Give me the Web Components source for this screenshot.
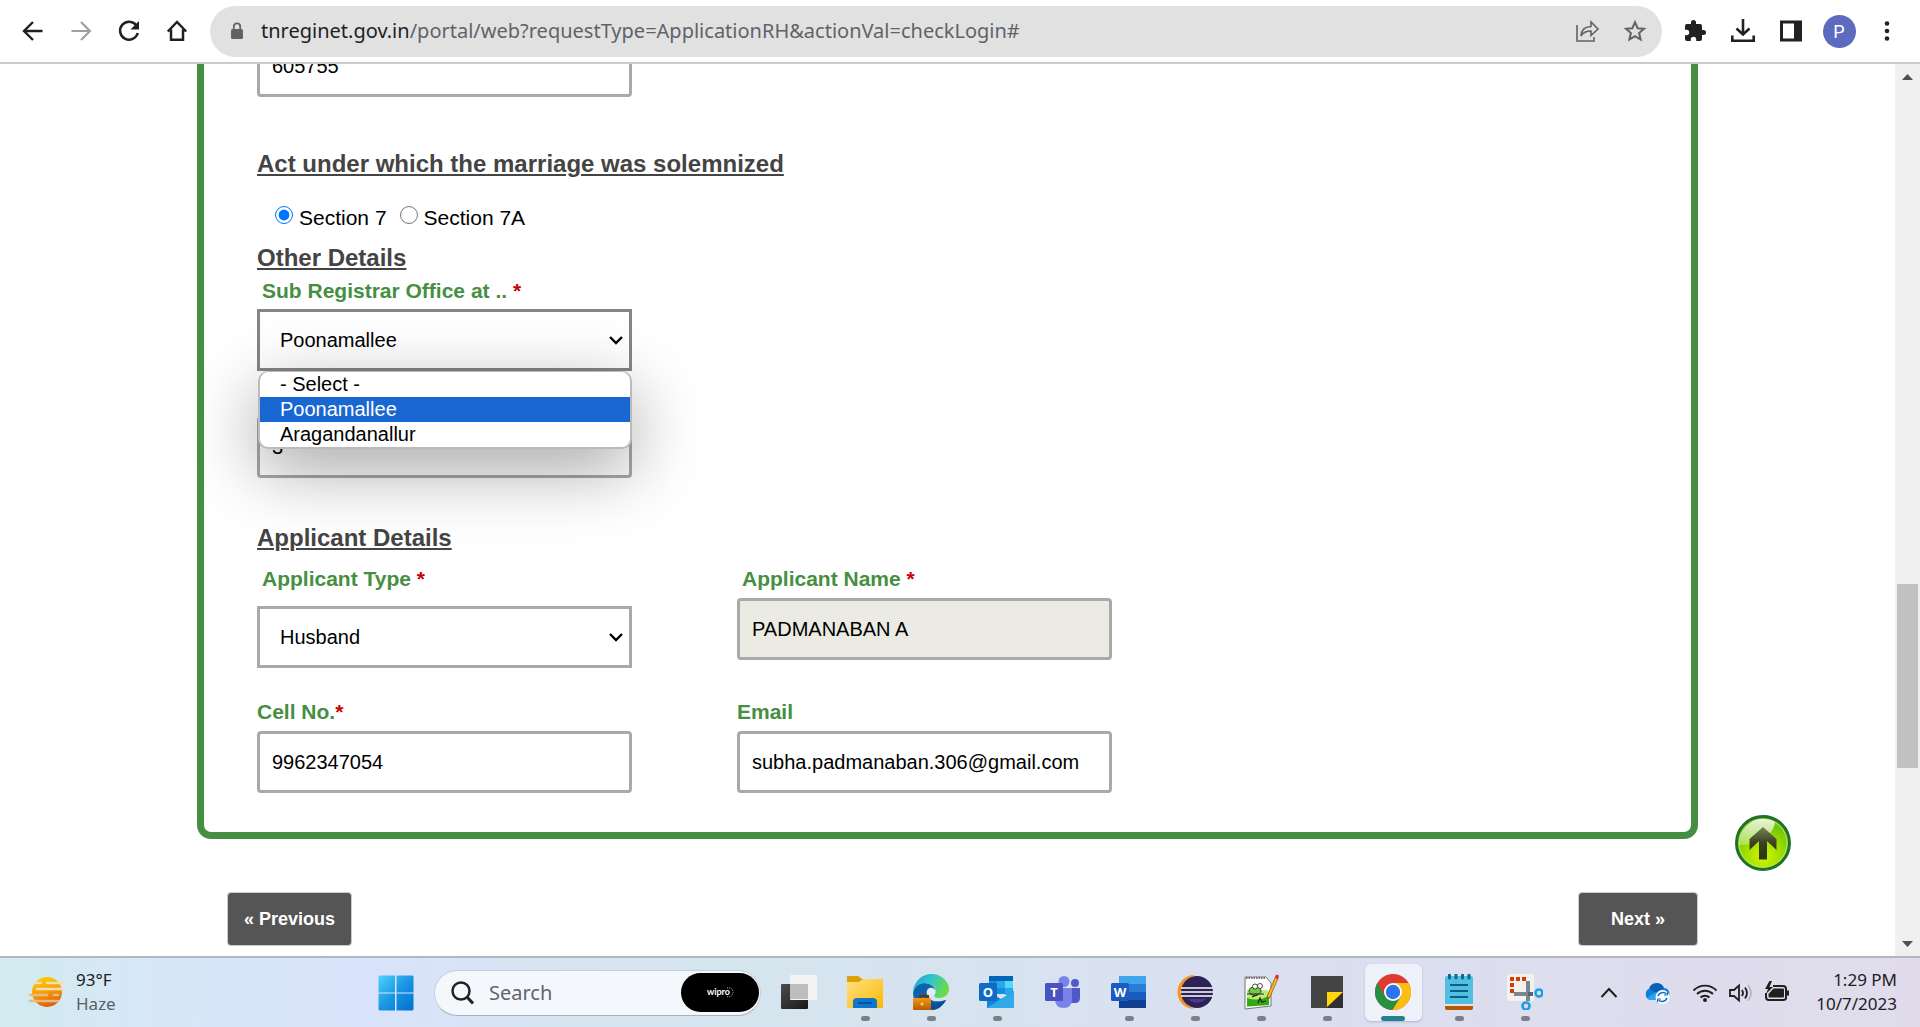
<!DOCTYPE html>
<html lang="en">
<head>
<meta charset="utf-8">
<title>Marriage registration</title>
<style>
html,body{height:100%}
body{margin:0;overflow:hidden;background:#fff;font-family:"Liberation Sans",Arial,sans-serif}
</style>
</head>
<body>
<desktop-screen></desktop-screen>

<template id="t-screen">
<style>
:host{display:flex;flex-direction:column;height:100vh}
web-page{flex:1;min-height:0}
</style>
<browser-toolbar></browser-toolbar>
<web-page></web-page>
<task-bar></task-bar>
</template>

<template id="t-toolbar">
<style>
:host{display:flex;align-items:center;height:62px;border-bottom:2px solid #cbcbcb;background:#fff;box-sizing:content-box;font-family:"Noto Sans","Open Sans",sans-serif;color:#202124}
button{all:unset;display:grid;place-items:center;width:48px;height:48px;flex:none}
svg{display:block;fill:none;stroke:currentColor}
.nav{display:flex;padding-left:9px;margin-right:9px}
.off{color:#a0a0a0}
.bar{display:flex;align-items:center;flex:1;height:51px;border-radius:26px;background:#e1e1e1;color:#5f6368;min-width:0;box-sizing:border-box;padding-right:3px}
.bar svg{flex:none}
.lock{margin-left:19px;margin-right:16px}
.url{flex:1;min-width:0;display:flex;align-items:center}
.url a{flex:1;font-size:20px;line-height:28px;color:#5f6368;text-decoration:none;white-space:nowrap;overflow:hidden}
.url b{font-weight:400;color:#202124}
.right{display:flex;padding-left:9px;padding-right:9px}
.avatar{width:33px;height:33px;border-radius:50%;background:#5c6bc0;color:#fff;font:18px/33px Roboto,sans-serif;text-align:center}
</style>
<nav class="nav" aria-label="Navigation">
<button aria-label="Back"><svg width="24" height="24" viewBox="0 0 24 24" stroke-width="2.4"><path d="M21.500 12H3.500M12 3 3 12l9 9"/></svg></button>
<button aria-label="Forward" class="off"><svg width="24" height="24" viewBox="0 0 24 24" stroke-width="2.200"><path d="M2.500 12h18M12 3l9 9-9 9"/></svg></button>
<button aria-label="Reload"><svg width="24" height="24" viewBox="0 0 24 24" stroke-width="2.500"><path d="M19.500 6.500A9 9 0 1 0 20.800 14"/><path d="M22 2v8.500h-8.500z" fill="currentColor" stroke="none"/></svg></button>
<button aria-label="Home"><svg width="24" height="24" viewBox="0 0 24 24" stroke-width="2.500"><path d="M2.800 12.500 12 3l9.200 9.500M6 10.500V20.800h12V10.500"/></svg></button>
</nav>
<div class="bar">
<svg class="lock" width="16" height="20" viewBox="0 0 16 20"><rect x="2" y="8" width="12" height="10" rx="1.500" fill="currentColor" stroke="none"/><path d="M4.800 9V5.500a3.200 3.200 0 0 1 6.400 0V9" stroke-width="1.800"/></svg>
<div class="url"><a href="#"><b>tnreginet.gov.in</b>/portal/web?requestType=ApplicationRH&amp;actionVal=checkLogin#</a></div>
<button aria-label="Share"><svg width="26" height="24" viewBox="0 0 26 24" stroke-width="1.600"><path d="M3 6v16h17v-4"/><path d="M7 17c.5-6 4-9.500 10-9.500V3l7 7-7 6.500V12c-5 0-8 1.500-10 5z"/></svg></button>
<button aria-label="Bookmark"><svg width="24" height="24" viewBox="0 0 24 24" stroke-width="2"><path d="m12 3.200 2.600 6 6.400.6-4.900 4.300 1.500 6.400L12 17.100l-5.600 3.400 1.500-6.400L3 9.800l6.400-.6z"/></svg></button>
</div>
<div class="right">
<button aria-label="Extensions"><svg width="24" height="24" viewBox="0 0 24 24"><path fill="currentColor" stroke="none" d="M20.500 11H19V7a2 2 0 0 0-2-2h-4V3.500a2.500 2.500 0 0 0-5 0V5H4a2 2 0 0 0-2 2v3.800h1.500a2.700 2.700 0 0 1 0 5.400H2V20a2 2 0 0 0 2 2h3.800v-1.500a2.700 2.700 0 0 1 5.400 0V22H17a2 2 0 0 0 2-2v-4h1.500a2.500 2.500 0 0 0 0-5z"/></svg></button>
<button aria-label="Downloads"><svg width="26" height="26" viewBox="0 0 26 26" stroke-width="2.600"><path d="M13 1v15M6.500 10.500 13 16.500l6.500-6M2.300 17.500v5.200h21.400v-5.200"/></svg></button>
<button aria-label="Side panel"><svg width="24" height="24" viewBox="0 0 24 24"><path fill="currentColor" fill-rule="evenodd" stroke="none" d="M1 1.500h22v21H1zM4 4.500v15h11v-15z"/></svg></button>
<button aria-label="Profile"><span class="avatar">P</span></button>
<button aria-label="Menu"><svg width="6" height="22" viewBox="0 0 6 22"><g fill="currentColor" stroke="none"><circle cx="3" cy="3.500" r="2.300"/><circle cx="3" cy="11" r="2.300"/><circle cx="3" cy="18.500" r="2.300"/></g></svg></button>
</div>
</template>

<template id="t-page">
<style>
:host{display:flex;overflow:hidden;background:#fff;position:relative}
main{flex:1;min-width:0;display:flex;flex-direction:column;justify-content:flex-end;align-items:center;padding-bottom:10px}
.wrap{width:100%;max-width:1501px;flex:none}
.pager{display:flex;justify-content:space-between;margin-top:53px;padding-left:30px}
.pager button{box-sizing:border-box;height:54px;padding:0 16px;border:1px solid #ccc;border-radius:4px;background:#555;color:#fff;font:bold 18px/24px "Liberation Sans",Arial,sans-serif}
.pager button.next{padding:0 32px}
.top{position:absolute;right:129px;bottom:85px;width:56px;height:56px;border:0;padding:0;background:none}
.top svg{display:block}
</style>
<main>
<div class="wrap">
<registration-form></registration-form>
<div class="pager"><button>« Previous</button><button class="next">Next »</button></div>
</div>
</main>
<scroll-track></scroll-track>
<button class="top" aria-label="Back to top"><svg width="56" height="56" viewBox="0 0 56 56">
<defs><radialGradient id="g" cx=".5" cy=".75" r=".65"><stop offset="0" stop-color="#d4f500"/><stop offset=".5" stop-color="#a0e000"/><stop offset="1" stop-color="#6fc010"/></radialGradient>
<linearGradient id="a" x1="0" y1="0" x2="0" y2="1"><stop offset="0" stop-color="#77805c"/><stop offset=".5" stop-color="#3a4020"/><stop offset="1" stop-color="#283810"/></linearGradient>
<linearGradient id="s" x1="0" y1="0" x2="0" y2="1"><stop offset="0" stop-color="#fff" stop-opacity=".85"/><stop offset="1" stop-color="#fff" stop-opacity=".3"/></linearGradient></defs>
<circle cx="28" cy="28" r="26.500" fill="url(#g)" stroke="#22702a" stroke-width="3"/><circle cx="28" cy="28" r="24" fill="none" stroke="#b5e86a" stroke-width="1"/>
<path d="M4.500 30A24 24 0 0 1 40 7c-1 10-11 22-35.500 23z" fill="url(#s)"/>
<path d="M28 12 41.500 24v11L32 26v18.500h-8V26l-9.500 9V24z" fill="url(#a)"/></svg></button>
</template>

<template id="t-scroll">
<style>
:host{display:flex;flex-direction:column;align-items:center;width:25px;box-sizing:border-box;padding:10px 0 9px;background:#f0f0f0;flex:none}
svg{display:block;fill:#505050;flex:none}
.before{flex:504}.thumb{flex:184;width:21px;background:#c1c1c1}.after{flex:173}
</style>
<svg width="11" height="6" viewBox="0 0 11 6"><path d="M0 6 5.500 0 11 6z"/></svg>
<div class="before"></div><div class="thumb"></div><div class="after"></div>
<svg width="11" height="6" viewBox="0 0 11 6"><path d="M0 0 5.500 6 11 0z"/></svg>
</template>

<template id="t-form">
<style>
:host{display:block;border:7px solid #468f42;border-radius:14px;padding:60px 53px 39px}
h3{margin:0;font-size:24px;line-height:28px;color:#444;text-decoration:underline;text-decoration-thickness:2px;text-underline-offset:2px;white-space:nowrap}
.row{display:grid;grid-template-columns:repeat(3,minmax(0,375px));column-gap:105px}
.radios{display:flex;margin:28px 0 14px 18px;font-size:21px;line-height:24px;color:#000}
.radios label{display:flex;margin-right:13px}
.radios input{width:18px;height:18px;margin:0 6px 0 0;accent-color:#0075ff}
.h1{margin-top:53px}.office{margin-top:7px}.gap{margin-top:45px}.h3{margin-top:46px}.app{margin-top:15px}.contact{margin-top:32px}
</style>
<div class="row"><form-field value="605755" name="Pin code"></form-field></div>
<h3 class="h1">Act under which the marriage was solemnized</h3>
<div class="radios"><label><input type="radio" name="act" checked>Section 7</label><label><input type="radio" name="act">Section 7A</label></div>
<h3>Other Details</h3>
<div class="row office"><select-field label="Sub Registrar Office at .." options="Poonamallee|- Select -|Aragandanallur" open></select-field></div>
<div class="row gap"><form-field value="3" name="Copies"></form-field></div>
<h3 class="h3">Applicant Details</h3>
<div class="row app"><select-field label="Applicant Type" options="Husband|Wife" loose></select-field><form-field label="Applicant Name" required indent value="PADMANABAN A" readonly></form-field></div>
<div class="row contact"><form-field label="Cell No." required tight value="9962347054"></form-field><form-field label="Email" value="subha.padmanaban.306@gmail.com"></form-field></div>
</template>

<template id="t-field">
<style>
:host{display:block}
label{display:block;margin-bottom:7px;font-weight:bold;font-size:21px;line-height:24px;color:#468f42;white-space:nowrap}
label span{color:#c00}
:host([indent]) label{padding-left:5px}
input{display:block;box-sizing:border-box;width:100%;height:62px;border:3px solid #a9a9a9;border-radius:4px;padding:0 12px;background:#fff;color:#000;font:20px/24px "Liberation Sans",Arial,sans-serif;outline:0}
input[readonly]{background:#ebebe4}
</style>
<label for="f"></label><input id="f" type="text">
</template>

<template id="t-select">
<style>
:host{display:block}
label{display:block;padding-left:5px;margin-bottom:6px;font-weight:bold;font-size:21px;line-height:24px;color:#468f42;white-space:nowrap}
label span{color:#c00}
:host([loose]) label{margin-bottom:15px}
.box{display:grid;align-items:center;position:relative}
.box>*{grid-area:1/1}
select{appearance:none;box-sizing:border-box;width:100%;height:62px;border:3px solid #a9a9a9;border-radius:0;padding:0 20px;background:#fff;color:#000;font:20px/24px "Liberation Sans",Arial,sans-serif;outline:0}
:host([open]) select{border-color:#858585}
svg{justify-self:end;margin-right:9px;fill:none;stroke:#000;stroke-width:2.400;pointer-events:none}
ul{position:absolute;z-index:2;top:62px;left:1px;right:0;margin:0;padding:0;list-style:none;border:2px solid #bbb;border-top-width:1px;border-radius:10px;overflow:hidden;background:#fff;box-shadow:0 20px 70px rgba(0,0,0,.36);font-size:20px;line-height:25px;color:#000}
li{padding-left:20px}
li[aria-selected=true]{background:#1967d2;color:#fff}
</style>
<label for="s"></label>
<div class="box"><select id="s"></select><svg width="14" height="10" viewBox="0 0 14 10"><path d="M1 2l6 6 6-6"/></svg></div>
</template>

<template id="t-taskbar">
<style>
:host{display:grid;grid-template-columns:1fr auto 1fr;align-items:center;height:69px;border-top:2px solid #b0b6c2;font-family:"Noto Sans","Open Sans",sans-serif;color:#202020;background:linear-gradient(90deg,#d2ebf0 0,#d8e6f8 10%,#d9e3fb 19%,#d6e4f0 30%,#d5e5ee 38%,#d8e2f0 55%,#dadff0 70%,#dedded 85%,#e0dcec 100%)}
svg{display:block}
button{all:unset}
.weather{display:flex;align-items:center;padding:0 0 2px 28px;gap:10px;font-size:17px;line-height:24px}
.weather small{display:block;font-size:17px;color:#5b6068}
.mid{display:flex;align-items:center;padding-right:2px}
.start{padding:0 20px 0 18px}
.search{display:flex;align-items:center;box-sizing:border-box;width:327px;height:46px;border-radius:23px;border:1px solid #c6cfdd;border-bottom-color:#a9b3c0;background:#f4f8fd;padding:0 1px 0 16px}
.search input{flex:1;min-width:0;border:0;background:none;outline:0;padding:0 0 0 15px;font:20px/28px "Noto Sans","Open Sans",sans-serif}
.search input::placeholder{color:#606468;opacity:1}
.wipro{width:78px;height:39px;border-radius:20px;background:#000;display:grid;place-items:center}
.tray{display:flex;align-items:center;justify-content:flex-end;padding-right:23px}
.tray svg{fill:none;stroke:#202020;margin-left:10px}
.tray svg.cloud{margin-left:26px}
.tray svg.wifi{margin-left:22px}
.clock{font-size:17px;line-height:24px;text-align:right;margin-left:26px;padding-bottom:2px;white-space:nowrap}
app-icon:first-of-type{margin-left:5px}
</style>
<div class="weather"><svg width="38" height="32" viewBox="0 0 38 32"><defs><linearGradient id="w" x1=".3" y1="0" x2=".6" y2="1"><stop offset="0" stop-color="#fcd000"/><stop offset=".5" stop-color="#f79a10"/><stop offset="1" stop-color="#e05a08"/></linearGradient></defs><circle cx="19" cy="16" r="15" fill="url(#w)"/><g stroke-width="2.600" stroke-linecap="round"><path d="M8 7h5M19 7h17M9 13h26" stroke="#f5dfb0"/><path d="M2 19h17M26 19h4M2 25h28" stroke="#e3bd7c"/></g></svg><div>93°F<small>Haze</small></div></div>
<div class="mid">
<button class="start" aria-label="Start"><svg width="36" height="36" viewBox="0 0 36 36"><defs><linearGradient id="q" x1="0" y1="0" x2="1" y2="1"><stop offset="0" stop-color="#4cd4ff"/><stop offset=".5" stop-color="#1a96e2"/><stop offset="1" stop-color="#0070d0"/></linearGradient></defs><path fill="url(#q)" d="M1.500.5H17v17H.5v-16zM18.500.5h16l1 1v16h-17zM.5 18.500H17v17H1.500l-1-1zM18.500 18.500h17v16l-1 1h-16z"/></svg></button>
<div class="search"><svg width="23" height="24" viewBox="0 0 23 24" fill="none" stroke="#222" stroke-width="2.500"><circle cx="10" cy="10" r="8.500"/><path d="m16 16 6 6.500" stroke-width="3"/></svg><input type="search" placeholder="Search" aria-label="Search"><span class="wipro"><svg width="28" height="14" viewBox="0 0 28 14"><text x="1" y="9" fill="#fff" font-family="Lato,sans-serif" font-weight="bold" font-size="9">wipro</text><path d="M21 2a4.500 4.500 0 1 1 0 8.500" fill="none" stroke="#ccc" stroke-dasharray="1 1"/></svg></span></div>
<app-icon name="Task view"><svg width="36" height="36" viewBox="0 0 36 36"><defs><linearGradient id="v" x1="0" y1="0" x2="1" y2="1"><stop offset="0" stop-color="#4d4d4d"/><stop offset="1" stop-color="#181818"/></linearGradient></defs><rect x="0" y="10" width="27" height="25" rx="1" fill="url(#v)"/><rect x="9" y="1" width="27" height="25" rx="1" fill="#f4f4f4"/><path d="M9 10h18v15H9z" fill="#bdbdbd"/></svg></app-icon>
<app-icon name="File Explorer" running><svg width="36" height="36" viewBox="0 0 36 36"><defs><linearGradient id="f" x1="0" y1="0" x2="1" y2="1"><stop offset="0" stop-color="#ffe083"/><stop offset="1" stop-color="#fcb900"/></linearGradient></defs><path d="M0 2h11l4 3h21v8H0z" fill="#dda006"/><path d="M0 8h12l4-3h20v29H0z" fill="url(#f)"/><path d="M6 34v-6q0-4 4-4h16q4 0 4 4v6z" fill="#0e76cc"/><path d="M11 29h14" stroke="#064b8c" stroke-width="1.600"/></svg></app-icon>
<app-icon name="Edge" running><svg width="36" height="36" viewBox="0 0 36 36"><defs><linearGradient id="e" x1="0" y1="0" x2="1" y2=".4"><stop offset="0" stop-color="#1b9ed8"/><stop offset=".5" stop-color="#2fc4cf"/><stop offset="1" stop-color="#6adb4d"/></linearGradient><linearGradient id="b" x1="0" y1="0" x2="0" y2="1"><stop offset="0" stop-color="#f09a1a"/><stop offset="1" stop-color="#b85a04"/></linearGradient></defs><path d="M0 19c1-6 5-10 11-10 6 0 10 3 11 7-4-4-9-1-8 4 1 7 9 9 19 6-4 7-9 10-15 10C8 36 0 29 0 19z" fill="#0c63ad"/><path d="M14 20c-2 8 7 12 19 6-4 7-9 10-15 10-6-3-8-10-4-16z" fill="#0d4f94"/><path d="M0 18C1 7 9 0 18.500 0 29 0 36 8 36 15c0 6-5 9-10 9-4 0-6-2-4-4 2-3 0-10-10-11C6 9 2 13 0 18z" fill="url(#e)"/><circle cx="18" cy="18" r="4.300" fill="#e3edf6"/><path d="M7 24v-2h8v2" fill="none" stroke="#6d3802" stroke-width="2"/><rect y="24" width="18" height="12" rx="1" fill="url(#b)"/><circle cx="9" cy="30" r="1.500" fill="#ffd54a"/></svg></app-icon>
<app-icon name="Outlook" running><svg width="36" height="36" viewBox="0 0 36 36"><path d="M10 2h24v18H10z" fill="#1490df"/><path d="M10 2h24v5H10z" fill="#0364b8"/><path d="M18 7h8v7h-8zM26 14h8v7h-8z" fill="#28a8ea"/><path d="M26 7h8v7h-8z" fill="#50d9ff"/><path d="M8 17l14 8 13-8v17H8z" fill="#1784d9"/><path d="M8 34 35 17v17z" fill="#32a9e8"/><rect y="9" width="18" height="18" rx="1.500" fill="#0f6cc4"/><text x="9" y="22.500" text-anchor="middle" fill="#fff" font-family="Open Sans,sans-serif" font-weight="bold" font-size="13">O</text></svg></app-icon>
<app-icon name="Teams"><svg width="36" height="36" viewBox="0 0 36 36"><circle cx="30" cy="9" r="4" fill="#5059c9"/><path d="M25 14h10v10q0 5-5 5h-5z" fill="#5059c9"/><circle cx="19" cy="7.500" r="5.500" fill="#7b83eb"/><path d="M10 14h17v11q0 9-8.500 9T10 25z" fill="#7b83eb"/><rect y="9" width="18" height="18" rx="1.500" fill="#4a52bd"/><text x="9" y="22.500" text-anchor="middle" fill="#fff" font-family="Open Sans,sans-serif" font-weight="bold" font-size="13">T</text></svg></app-icon>
<app-icon name="Word" running><svg width="36" height="36" viewBox="0 0 36 36"><path d="M8 2h27v8H8z" fill="#41a5ee"/><path d="M8 10h27v8H8z" fill="#2b7cd3"/><path d="M8 18h27v8H8z" fill="#185abd"/><path d="M8 26h27v8H8z" fill="#103f91"/><rect y="9" width="18" height="18" rx="1.500" fill="#1b5cbe"/><text x="9" y="22.500" text-anchor="middle" fill="#fff" font-family="Open Sans,sans-serif" font-weight="bold" font-size="13">W</text></svg></app-icon>
<app-icon name="Eclipse" running><svg width="36" height="36" viewBox="0 0 36 36"><path d="M18 1A17 17 0 0 0 17 35 18 18 0 0 1 17 1.500z" fill="#f7941e"/><circle cx="20" cy="18" r="16" fill="#2c2255"/><path d="M11 25a11 9 0 0 0 18 0z" fill="#483a8b"/><path d="M4 14h32M3.500 18h33M4 22h32" stroke="#fff" stroke-width="1.700"/></svg></app-icon>
<app-icon name="Notepad++" running><svg width="36" height="36" viewBox="0 0 36 36"><path d="M2 3h21l5 6v23L2 35z" fill="#fbfbfb" stroke="#777" stroke-width="1"/><path d="M3 4h19" stroke="#777" stroke-width="2" stroke-dasharray="1.500 1"/><path d="M4 16h20l2 2v13L4 32.500z" fill="#b9ec7a"/><path d="M4 24q11 4 22-2v9L4 32.500z" fill="#30a912"/><ellipse cx="12" cy="17" rx="6" ry="4.500" fill="#73c848" stroke="#28520e"/><circle cx="12" cy="12.500" r="2.500" fill="#fff" stroke="#222" stroke-width=".8"/><circle cx="17" cy="12" r="2.500" fill="#fff" stroke="#222" stroke-width=".8"/><path d="M4 20h17M9 23l5-2M15 29l2-5 2 4 4-1" stroke="#222" stroke-width="1.200" fill="none"/><path d="m34 3-9 21" stroke="#8d5c00" stroke-width="3.500"/><path d="m34 3-8.500 20" stroke="#f5b52a" stroke-width="2.200"/><path d="m34.500 1-1 3.500" stroke="#c33" stroke-width="3"/></svg></app-icon>
<app-icon name="Sticky Notes" running><svg width="36" height="36" viewBox="0 0 36 36"><path d="M2 2h32v32H2z" fill="#444"/><path d="M18 34 34 18v16z" fill="#303030"/><path d="M18 18h16L18 33z" fill="#ffd60a"/></svg></app-icon>
<app-icon name="Chrome" running active><svg width="36" height="36" viewBox="0 0 36 36"><circle cx="18" cy="18" r="18" fill="#de3c31"/><path d="M2.400 9A18 18 0 0 0 17.500 36l8.300-13.500H10.200z" fill="#259140"/><path d="M18 9h15.600A18 18 0 0 1 17.500 36l8.300-13.500z" fill="#fbbf14"/><circle cx="18" cy="18" r="9" fill="#fff"/><circle cx="18" cy="18" r="7.200" fill="#2a74ec"/></svg></app-icon>
<app-icon name="Notepad" running><svg width="36" height="36" viewBox="0 0 36 36"><path d="M4 31h28v3q0 2-2 2H6q-2 0-2-2z" fill="#b5560c"/><path d="M4 29h28v3H4z" fill="#e8e4dc"/><path d="M4 4q0-2 2-2h24q2 0 2 2v26H4z" fill="#50bfe2"/><path d="M9 11h18M9 17h18M9 23h18" stroke="#0b5f86" stroke-width="2"/><path d="M8.500 1v3M15 1v3M21.500 1v3M28 1v3" stroke="#0b6a90" stroke-width="3" stroke-linecap="round"/></svg></app-icon>
<app-icon name="Snipping Tool" running><svg width="36" height="36" viewBox="0 0 36 36"><rect width="27" height="27" rx="3" fill="#f3f1f0"/><path d="M3 5h17" stroke="#d83b01" stroke-width="4" stroke-dasharray="4 2"/><path d="M5 9v10" stroke="#d83b01" stroke-width="4" stroke-dasharray="4 2"/><path d="M7 20h19M21 7v20" stroke="#7b868f" stroke-width="4"/><path d="M21 20h5" stroke="#59646c" stroke-width="4"/><circle cx="32" cy="19" r="3.500" fill="none" stroke="#1a9fe8" stroke-width="2.600"/><circle cx="19" cy="32" r="3.500" fill="none" stroke="#1a9fe8" stroke-width="2.600"/></svg></app-icon>
</div>
<div class="tray">
<svg width="18" height="24" viewBox="0 0 18 24" stroke-width="2"><path d="m1.500 16 7.500-8 7.500 8"/></svg>
<svg class="cloud" width="26" height="24" viewBox="0 0 26 24"><path d="M6 19a6 6 0 0 1 0-11.500A8 8 0 0 1 20 7a5.500 5.500 0 0 1 3 10q-1 2-4 2z" fill="#1180dc" stroke="none"/><path d="M5 7.500A8 8 0 0 1 20 7l-8 5z" fill="#0a5fb5" stroke="none"/><path d="m3 17 9-6 7 8H6z" fill="#2ba5f0" stroke="none"/><circle cx="18.500" cy="16" r="7" fill="#fff" stroke="none"/><path d="M14 15a5 4.500 0 0 1 8.500-2M23 17a5 4.500 0 0 1-8.500 2" stroke="#1570b8" stroke-width="1.600"/><path d="M23.500 10.500v3.500H20M13.500 21.500V18H17" stroke="#1570b8" stroke-width="1"/></svg>
<svg class="wifi" width="26" height="24" viewBox="0 0 26 24" stroke-width="1.900"><path d="M1.500 9.500a16 16 0 0 1 23 0M5 13a11.500 11.500 0 0 1 16 0M8.500 16.500a6.500 6.500 0 0 1 9 0"/><circle cx="13" cy="19" r="2" fill="#202020" stroke="none"/></svg>
<svg width="26" height="24" viewBox="0 0 26 24" stroke-width="1.800"><path d="M2 9h4l5-4.500v15L6 15H2z"/><path d="M14 9q2 3 0 6M17 6.500q4 5.500 0 11"/><path d="M20 4q6 8 0 16" stroke="#b4b6c0"/></svg>
<svg width="26" height="24" viewBox="0 0 26 24" stroke-width="2"><path d="M9 5h10q3 0 3 3v9q0 2-3 2H5q-3 0-3-3v-4"/><path d="M9.500 7.500H19q1 0 1 1V15q0 1.500-1 1.500H5.500q-1 0-1-1V13z" fill="#202020" stroke="none"/><path d="M22 9.500h3v5h-3zM6-1 1 8h3l-2 5 7-7H5.500L8 0z" fill="#202020" stroke="none"/></svg>
<div class="clock">1:29 PM<br>10/7/2023</div>
</div>
</template>

<template id="t-app">
<style>
:host{display:flex;width:66px;justify-content:center}
button{all:unset;box-sizing:border-box;width:57px;height:57px;padding-top:10px;display:flex;flex-direction:column;align-items:center;border-radius:6px}
:host([active]) button{background:#eef1fa;box-shadow:0 1px 2px rgba(80,90,120,.3)}
i{display:none;width:9px;height:5px;border-radius:3px;background:#7b7f88;margin-top:6px}
:host([running]) i{display:block}
:host([active]) i{width:24px;background:#25808f}
::slotted(svg){display:block}
</style>
<button><slot></slot><i></i></button>
</template>

<script>
class Base extends HTMLElement{
  constructor(){
    super();
    const t=document.getElementById(this.constructor.tpl);
    this.attachShadow({mode:'open'}).append(t.content.cloneNode(true));
  }
  setLabel(required){
    const l=this.shadowRoot.querySelector('label'), text=this.getAttribute('label');
    if(!text){l.remove();return;}
    l.textContent=text+(required&&!this.hasAttribute('tight')?' ':'');
    if(required){const s=document.createElement('span');s.textContent='*';l.append(s);}
  }
}
class FormField extends Base{
  static tpl='t-field';
  connectedCallback(){
    this.setLabel(this.hasAttribute('required'));
    const i=this.shadowRoot.querySelector('input');
    i.value=this.getAttribute('value')||'';
    i.readOnly=this.hasAttribute('readonly');
    if(!this.hasAttribute('label'))i.setAttribute('aria-label',this.getAttribute('name'));
  }
}
class SelectField extends Base{
  static tpl='t-select';
  connectedCallback(){
    this.setLabel(true);
    const names=this.getAttribute('options').split('|');
    const chosen=names[0];
    if(this.hasAttribute('open'))[names[0],names[1]]=[names[1],names[0]];
    const s=this.shadowRoot.querySelector('select');
    for(const n of names)s.add(new Option(n,n,n===chosen,n===chosen));
    if(this.hasAttribute('open')){
      const ul=document.createElement('ul');
      ul.setAttribute('role','listbox');
      for(const n of names){
        const li=document.createElement('li');
        li.setAttribute('role','option');
        li.setAttribute('aria-selected',n===chosen);
        li.textContent=n;
        ul.append(li);
      }
      s.parentNode.append(ul);
    }
  }
}
class AppIcon extends Base{
  static tpl='t-app';
  connectedCallback(){this.shadowRoot.querySelector('button').setAttribute('aria-label',this.getAttribute('name'));}
}
customElements.define('form-field',FormField);
customElements.define('select-field',SelectField);
customElements.define('app-icon',AppIcon);
customElements.define('scroll-track',class extends Base{static tpl='t-scroll'});
customElements.define('registration-form',class extends Base{static tpl='t-form'});
customElements.define('browser-toolbar',class extends Base{static tpl='t-toolbar'});
customElements.define('web-page',class extends Base{static tpl='t-page'});
customElements.define('task-bar',class extends Base{static tpl='t-taskbar'});
customElements.define('desktop-screen',class extends Base{static tpl='t-screen'});
</script>
</body>
</html>
